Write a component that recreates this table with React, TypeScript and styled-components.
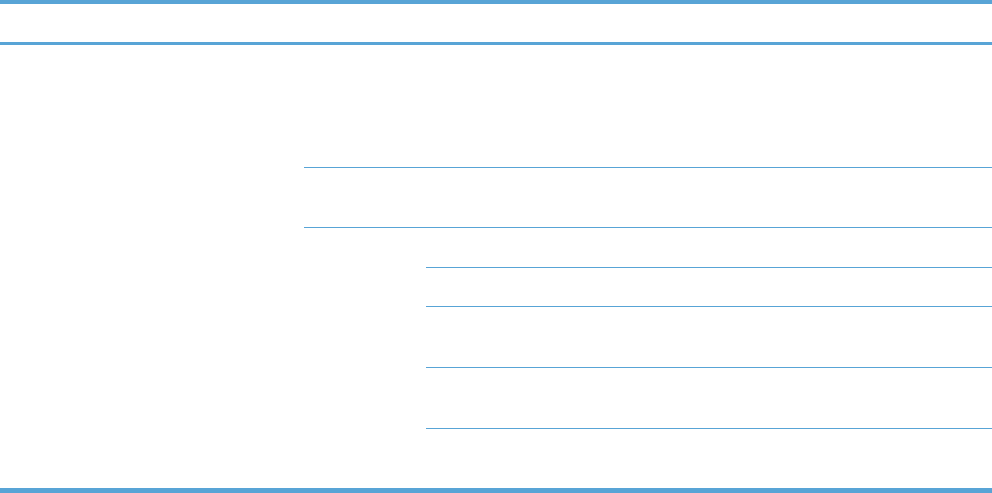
import React from 'react';
import styled, { createGlobalStyle } from 'styled-components';

const rule = '#58a4d6';

const GlobalStyle = createGlobalStyle`
  html, body {
    margin: 0;
    padding: 0;
    background: #fff;
    font-family: "Liberation Sans", Arial, sans-serif;
  }
`;

const Table = styled.div`
  width: 992px;
  border-top: 4px solid ${rule};
  border-bottom: 5px solid ${rule};
  box-sizing: border-box;
`;

const Header = styled.div`
  height: 38px;
  border-bottom: 3px solid ${rule};
`;

const Body = styled.div`
  display: flex;
`;

const FirstCol = styled.div`
  width: 304px;
  flex: none;
`;

const Stack = styled.div`
  flex: 1;
  display: flex;
  flex-direction: column;
`;

const Row = styled.div<{ $h?: number }>`
  display: flex;
  ${(p) => (p.$h ? `height: ${p.$h}px;` : '')}
  & + & {
    border-top: 1px solid ${rule};
  }
`;

const MidCol = styled.div`
  width: 122px;
  flex: none;
`;

const SubRow = styled.div<{ $h: number }>`
  height: ${(p) => p.$h}px;
  & + & {
    border-top: 1px solid ${rule};
  }
`;

const subRows = [39, 38, 60, 60, 59];

export default function App() {
  return (
    <>
      <GlobalStyle />
      <Table>
        <Header />
        <Body>
          <FirstCol />
          <Stack>
            <Row $h={122} />
            <Row $h={59} />
            <Row>
              <MidCol />
              <Stack>
                {subRows.map((h, i) => (
                  <SubRow key={i} $h={h} />
                ))}
              </Stack>
            </Row>
          </Stack>
        </Body>
      </Table>
    </>
  );
}
